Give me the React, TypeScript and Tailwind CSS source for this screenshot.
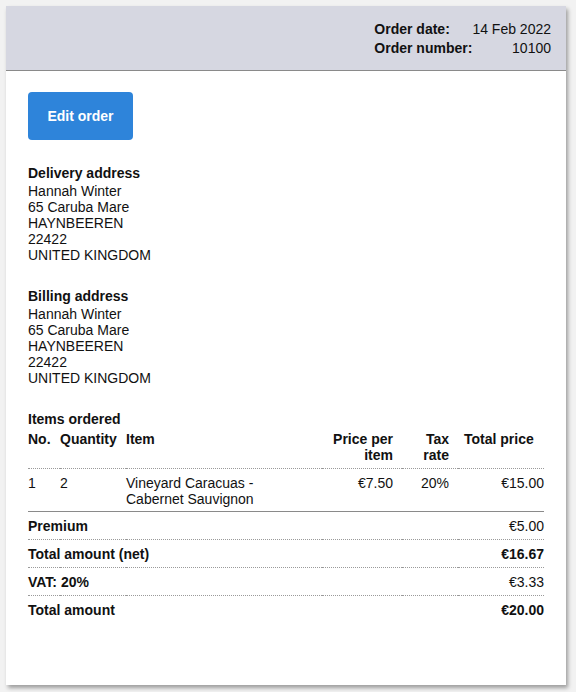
import React from "react";

type Address = {
  name: string;
  street: string;
  city: string;
  postcode: string;
  country: string;
};

const address: Address = {
  name: "Hannah Winter",
  street: "65 Caruba Mare",
  city: "HAYNBEEREN",
  postcode: "22422",
  country: "UNITED KINGDOM",
};

const AddressBlock: React.FC<{ title: string; address: Address }> = ({ title, address }) => (
  <div className="mt-6">
    <p className="font-bold leading-[19px]">{title}</p>
    <p>{address.name}</p>
    <p>{address.street}</p>
    <p>{address.city}</p>
    <p>{address.postcode}</p>
    <p>{address.country}</p>
  </div>
);

const totals = [
  { label: "Premium", value: "€5.00", strong: false },
  { label: "Total amount (net)", value: "€16.67", strong: true },
  { label: "VAT: 20%", value: "€3.33", strong: false },
  { label: "Total amount", value: "€20.00", strong: true },
];

const App: React.FC = () => {
  return (
    <div
      className="min-h-screen bg-[#f2f2f2] p-[6px] text-[14px] leading-4 text-[#111]"
      style={{ fontFamily: '"Liberation Sans", Arial, sans-serif' }}
    >
      <div className="h-[679px] w-[560px] bg-white shadow-[2px_3px_4px_rgba(0,0,0,0.35)]">
        {/* Order header */}
        <header className="flex justify-end border-b border-[#8a8a8a] bg-[#d6d7e1] pt-[14px] pr-[15px] pb-[12px]">
          <div className="grid grid-cols-[auto_auto] leading-[19px]">
            <span className="font-bold">Order date:</span>
            <span className="text-right">14 Feb 2022</span>
            <span className="font-bold">Order number:</span>
            <span className="text-right">10100</span>
          </div>
        </header>

        <div className="px-[22px] pt-[21px]">
          <button className="h-12 w-[105px] rounded-[4px] bg-[#2e84da] font-bold text-white">
            Edit order
          </button>

          <AddressBlock title="Delivery address" address={address} />
          <AddressBlock title="Billing address" address={address} />

          {/* Items ordered */}
          <div className="mt-6 w-[516px]">
            <p className="font-bold leading-[19px]">Items ordered</p>
            <table className="w-full table-fixed border-collapse">
              <colgroup>
                <col className="w-[32px]" />
                <col className="w-[66px]" />
                <col />
                <col className="w-[80px]" />
                <col className="w-[56px]" />
                <col className="w-[86px]" />
              </colgroup>
              <thead>
                <tr className="border-b border-dotted border-[#9a9a9a] align-top font-bold">
                  <th className="pt-[2px] pb-[5px] text-left">No.</th>
                  <th className="pt-[2px] pb-[5px] text-left">Quantity</th>
                  <th className="pt-[2px] pb-[5px] text-left">Item</th>
                  <th className="pt-[2px] pr-[9px] pb-[5px] text-right">
                    Price per
                    <br />
                    item
                  </th>
                  <th className="pt-[2px] pr-[9px] pb-[5px] text-right">
                    Tax
                    <br />
                    rate
                  </th>
                  <th className="pt-[2px] pb-[5px] pl-[6px] text-left">Total price</th>
                </tr>
              </thead>
              <tbody>
                <tr className="border-b border-[#8a8a8a] align-top">
                  <td className="pt-[6px] pb-[4px]">1</td>
                  <td className="pt-[6px] pb-[4px]">2</td>
                  <td className="pt-[6px] pb-[4px]">
                    Vineyard Caracuas -
                    <br />
                    Cabernet Sauvignon
                  </td>
                  <td className="pt-[6px] pr-[9px] pb-[4px] text-right">€7.50</td>
                  <td className="pt-[6px] pr-[9px] pb-[4px] text-right">20%</td>
                  <td className="pt-[6px] pb-[4px] text-right">€15.00</td>
                </tr>
                {totals.map((row, i) => (
                  <tr
                    key={row.label}
                    className={
                      i < totals.length - 1 ? "border-b border-dotted border-[#9a9a9a]" : ""
                    }
                  >
                    <td colSpan={5} className="pt-[6px] pb-[5px] font-bold">
                      {row.label}
                    </td>
                    <td className={`pt-[6px] pb-[5px] text-right ${row.strong ? "font-bold" : ""}`}>
                      {row.value}
                    </td>
                  </tr>
                ))}
              </tbody>
            </table>
          </div>
        </div>
      </div>
    </div>
  );
};

export default App;
